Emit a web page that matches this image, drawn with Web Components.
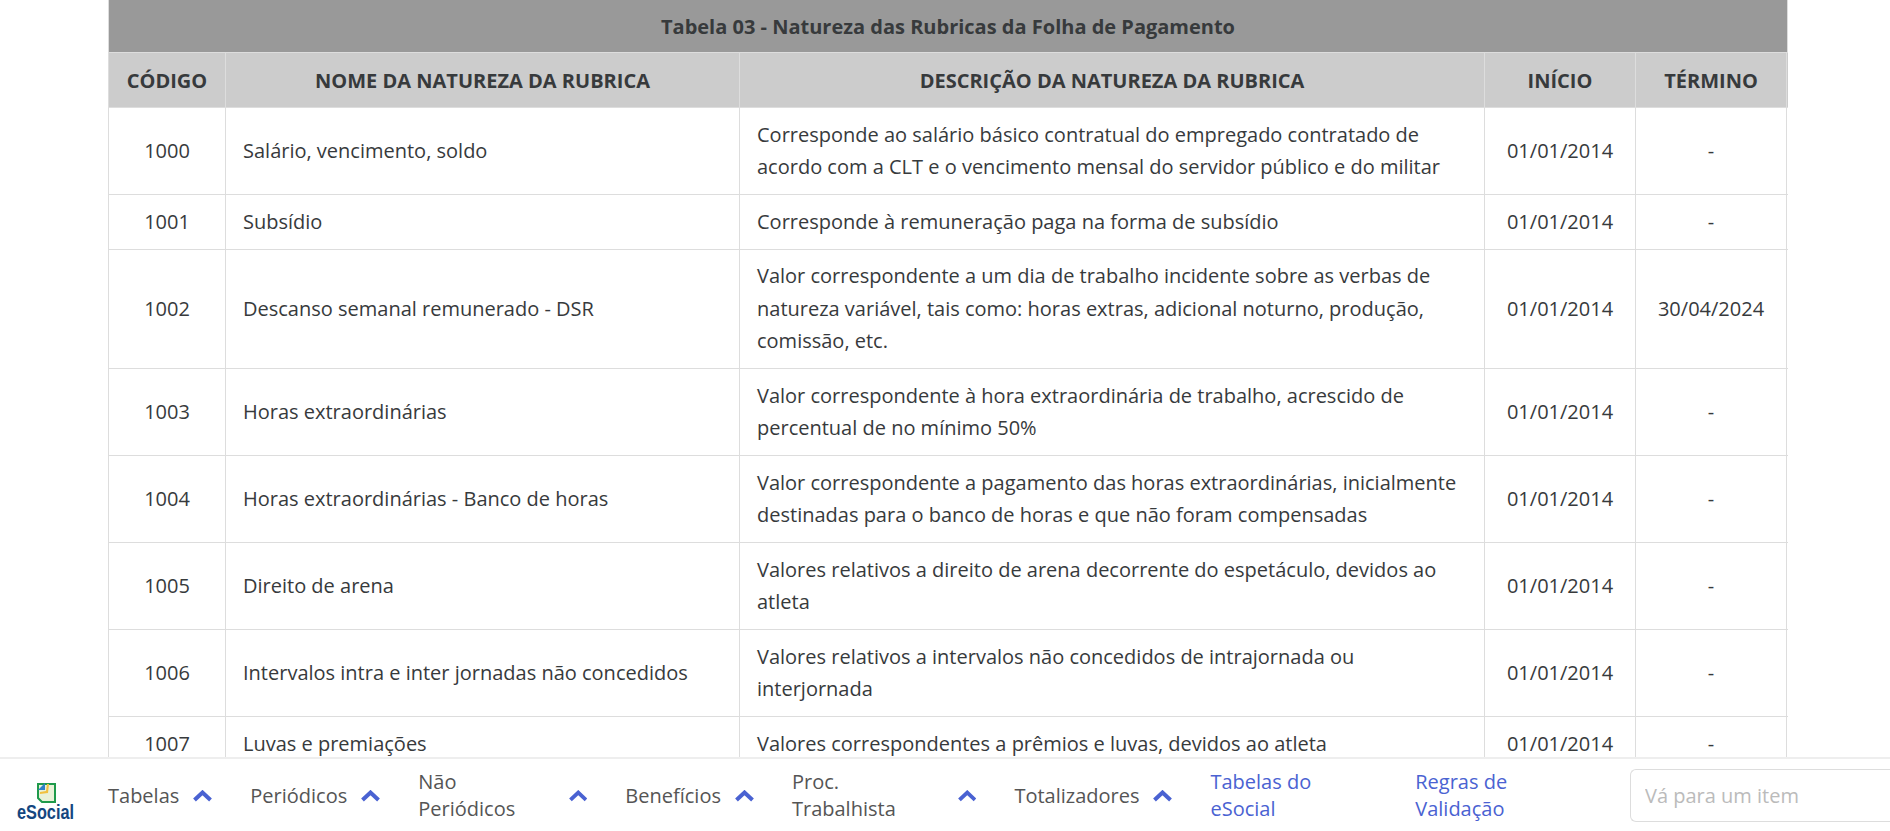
<!DOCTYPE html>
<html lang="pt-BR">
<head>
<meta charset="utf-8">
<title>Tabela 03</title>
<style>
  html, body { margin: 0; height: 100%; }
  body { display: flex; flex-direction: column; overflow: hidden; background: #fff; font-family: "Open Sans", "Noto Sans", sans-serif; }
  rubrica-table { flex: 1 1 auto; min-height: 0; }
</style>
</head>
<body>
  <rubrica-table heading="Tabela 03 - Natureza das Rubricas da Folha de Pagamento">
    <rubrica-row codigo="1000" inicio="01/01/2014" termino="-"><span slot="nome">Salário, vencimento, soldo</span><span slot="descricao">Corresponde ao salário básico contratual do empregado contratado de acordo com a CLT e o vencimento mensal do servidor público e do militar</span></rubrica-row>
    <rubrica-row codigo="1001" inicio="01/01/2014" termino="-"><span slot="nome">Subsídio</span><span slot="descricao">Corresponde à remuneração paga na forma de subsídio</span></rubrica-row>
    <rubrica-row codigo="1002" inicio="01/01/2014" termino="30/04/2024"><span slot="nome">Descanso semanal remunerado - DSR</span><span slot="descricao">Valor correspondente a um dia de trabalho incidente sobre as verbas de natureza variável, tais como: horas extras, adicional noturno, produção, comissão, etc.</span></rubrica-row>
    <rubrica-row codigo="1003" inicio="01/01/2014" termino="-"><span slot="nome">Horas extraordinárias</span><span slot="descricao">Valor correspondente à hora extraordinária de trabalho, acrescido de percentual de no mínimo 50%</span></rubrica-row>
    <rubrica-row codigo="1004" inicio="01/01/2014" termino="-"><span slot="nome">Horas extraordinárias - Banco de horas</span><span slot="descricao">Valor correspondente a pagamento das horas extraordinárias, inicialmente destinadas para o banco de horas e que não foram compensadas</span></rubrica-row>
    <rubrica-row codigo="1005" inicio="01/01/2014" termino="-"><span slot="nome">Direito de arena</span><span slot="descricao">Valores relativos a direito de arena decorrente do espetáculo, devidos ao atleta</span></rubrica-row>
    <rubrica-row codigo="1006" inicio="01/01/2014" termino="-"><span slot="nome">Intervalos intra e inter jornadas não concedidos</span><span slot="descricao">Valores relativos a intervalos não concedidos de intrajornada ou interjornada</span></rubrica-row>
    <rubrica-row codigo="1007" inicio="01/01/2014" termino="-"><span slot="nome">Luvas e premiações</span><span slot="descricao">Valores correspondentes a prêmios e luvas, devidos ao atleta</span></rubrica-row>
  </rubrica-table>

  <app-footer>
    <nav-menu>Tabelas</nav-menu>
    <nav-menu>Periódicos</nav-menu>
    <nav-menu>Não Periódicos</nav-menu>
    <nav-menu>Benefícios</nav-menu>
    <nav-menu>Proc. Trabalhista</nav-menu>
    <nav-menu>Totalizadores</nav-menu>
    <nav-link>Tabelas do eSocial</nav-link>
    <nav-link>Regras de Validação</nav-link>
  </app-footer>

<script>
const COLS = '117px 514px 745px 151px 151px';

class RubricaTable extends HTMLElement {
  connectedCallback() {
    this.attachShadow({ mode: 'open' });
    this.shadowRoot.innerHTML = `
      <style>
        :host { display: block; overflow: hidden; padding-left: 108px; color: #373a3c; }
        .wrap { width: 1679px; border-left: 1px solid #ddd; }
        .title {
          height: 53px; line-height: 53px; background: #999; text-align: center;
          font-size: 20px; font-weight: 700; border-bottom: 1px solid #ddd;
          box-sizing: border-box; border-right: 1px solid #ddd;
        }
        .head { display: grid; grid-template-columns: ${COLS}; background: #ccc; height: 55px; box-sizing: border-box; border-bottom: 1px solid #ddd; }
        .head div { display: flex; align-items: center; justify-content: center; font-size: 20px; font-weight: 700; border-right: 1px solid #ddd; box-sizing: border-box; }
      </style>
      <div class="wrap">
        <div class="title">${this.getAttribute('heading')}</div>
        <div class="head">
          <div>CÓDIGO</div><div>NOME DA NATUREZA DA RUBRICA</div><div>DESCRIÇÃO DA NATUREZA DA RUBRICA</div><div>INÍCIO</div><div>TÉRMINO</div>
        </div>
        <slot></slot>
      </div>`;
  }
}

class RubricaRow extends HTMLElement {
  connectedCallback() {
    this.attachShadow({ mode: 'open' });
    this.shadowRoot.innerHTML = `
      <style>
        :host { display: grid; grid-template-columns: ${COLS}; border-bottom: 1px solid #ddd; font-size: 20px; line-height: 32.5px; }
        .c { display: flex; align-items: center; box-sizing: border-box; padding: 10.5px 17px; border-right: 1px solid #ddd; }
        .mid { justify-content: center; padding-left: 4px; padding-right: 4px; }
      </style>
      <div class="c mid">${this.getAttribute('codigo')}</div>
      <div class="c"><slot name="nome"></slot></div>
      <div class="c"><div><slot name="descricao"></slot></div></div>
      <div class="c mid">${this.getAttribute('inicio')}</div>
      <div class="c mid">${this.getAttribute('termino')}</div>`;
  }
}

class NavMenu extends HTMLElement {
  connectedCallback() {
    this.attachShadow({ mode: 'open' });
    this.shadowRoot.innerHTML = `
      <style>
        :host { display: inline-flex; align-items: center; gap: 14px; color: #555; font-size: 20px; }
        svg { width: 19px; height: 12px; display: block; margin-top: 2px; }
      </style>
      <slot></slot>
      <svg viewBox="0 0 19 12"><path d="M1.5 10 9.5 2.5 17.5 10" fill="none" stroke="#4a62d2" stroke-width="4"/></svg>`;
  }
}

class NavLink extends HTMLElement {
  connectedCallback() {
    this.attachShadow({ mode: 'open' });
    this.shadowRoot.innerHTML = `
      <style>:host { display: inline-block; color: #4a62d2; font-size: 20px; }</style>
      <slot></slot>`;
  }
}

class AppFooter extends HTMLElement {
  connectedCallback() {
    this.attachShadow({ mode: 'open' });
    this.shadowRoot.innerHTML = `
      <style>
        :host { display: flex; flex: none; align-items: center; height: 74px; box-sizing: border-box; border-top: 2px solid #eee; background: #fff; }
        .logo { flex: none; width: 108px; height: 100%; }
        .items { display: flex; align-items: center; gap: 38px; }
        input {
          flex: none; margin-left: 33px; width: 260px; height: 53px; box-sizing: border-box; padding: 0 14px;
          border: 1px solid #ddd; border-right: 0; border-radius: 6px 0 0 6px; font: 20px "Open Sans", sans-serif; outline: none;
        }
        input::placeholder { color: #bbb; }
      </style>
      <svg class="logo" viewBox="0 0 108 72">
        <path d="M38 25h17v18H42l-4-4z" fill="#e9f1d8" stroke="#1f9a4b" stroke-width="2"/>
        <path d="M38 31l7-7v7z" fill="#2f80c8"/>
        <path d="M40 33l6-1 1-7 2 0-1 9-8 1z" fill="#f0c040"/>
        <text x="17" y="60" textLength="57" lengthAdjust="spacingAndGlyphs" font-family="Liberation Sans" font-weight="700" font-size="21" fill="#14467f">eSocial</text>
      </svg>
      <div class="items"><slot></slot></div>
      <input placeholder="Vá para um item">`;
  }
}

customElements.define('rubrica-table', RubricaTable);
customElements.define('rubrica-row', RubricaRow);
customElements.define('nav-menu', NavMenu);
customElements.define('nav-link', NavLink);
customElements.define('app-footer', AppFooter);
</script>
</body>
</html>
